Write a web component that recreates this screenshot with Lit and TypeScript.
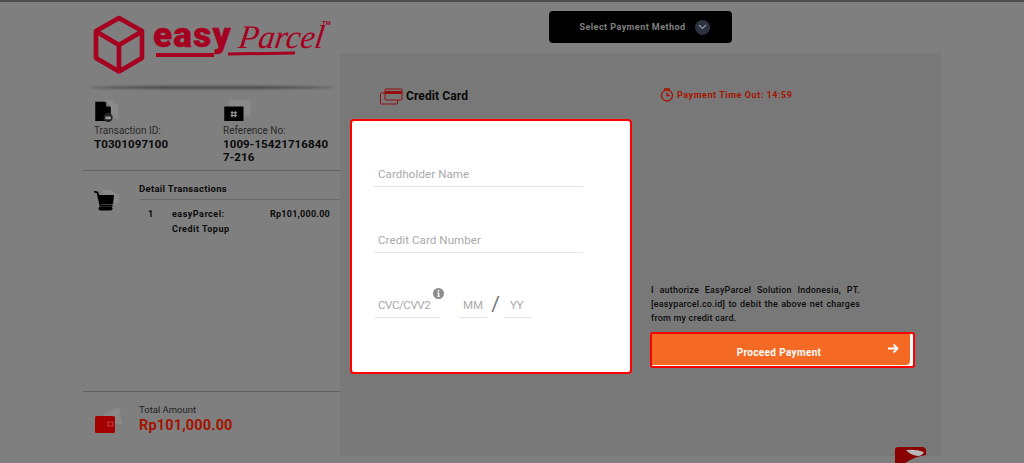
import { LitElement, html, css, svg } from "lit";
import { customElement } from "lit/decorators.js";

const logoMark = svg`<svg class="mark" width="52" height="60" viewBox="0 0 52 60" fill="none" stroke="#a5001f" stroke-width="4.6" stroke-linejoin="round"><path d="M26 3 L49 16 V43 L26 56.5 L3 43 V16 Z"/><path d="M4 17 L26 30 L48 17 M26 30 V55"/></svg>`;

@customElement("app-root")
export class AppRoot extends LitElement {
  static styles = css`
    :host { display: block; width: 1024px; height: 463px; overflow: hidden; position: relative; background: #7f7f7f; font-family: Roboto, "Liberation Sans", sans-serif; color: #0a0a0a; border-top: 2px solid #4d4d4d; box-sizing: border-box; }
    .page { display: flex; height: 461px; padding-left: 83px; box-sizing: border-box; }
    .left { width: 257px; flex: none; display: flex; flex-direction: column; }
    .logo { height: 84px; flex: none; display: flex; align-items: flex-start; padding: 13px 0 0 10px; box-sizing: border-box; gap: 7px; position: relative; }
    .wordmark { position: relative; width: 180px; height: 56px; color: #a5001f; }
    .easy { position: absolute; left: 1px; top: 2px; font: 900 35px/38px Roboto, sans-serif; letter-spacing: 1.3px; -webkit-text-stroke: 0.5px #a5001f; }
    .parcel { position: absolute; left: 87px; top: -1px; font: italic 400 33px/46px "Liberation Serif", serif; letter-spacing: -0.3px; transform: skewX(-8deg); }
    .tm { position: absolute; left: 170px; top: 4px; font: 700 6px/8px "Liberation Sans", sans-serif; }
    .ul1 { position: absolute; left: 4px; top: 38px; width: 58px; height: 3.5px; background: #a5001f; }
    .ul2 { position: absolute; left: 76px; top: 37px; width: 67px; height: 3px; background: #a5001f; transform: rotate(-1deg); }
    .shadow { height: 3px; flex: none; width: 245px; margin-left: 6px; border-radius: 50%; background: #4a4a4a; filter: blur(1.2px); }
    .ids { display: grid; grid-template-columns: 129px 1fr; padding: 11px 0 0 11px; height: 82px; flex: none; box-sizing: border-box; border-bottom: 1px solid #5f5f5f; }
    .ids .lbl { font-size: 10px; line-height: 12px; color: #2a2a2a; margin-top: 3px; }
    .ids .val { font-size: 11.5px; line-height: 13px; font-weight: 700; letter-spacing: 0.1px; margin-top: 1px; white-space: nowrap; }
    .ico { height: 22px; display: block; }
    .detail { flex: 1; display: flex; padding: 12px 0 0 11px; border-bottom: 1px solid #5f5f5f; }
    .detail .cart { width: 45px; flex: none; padding-top: 7px; }
    .dt { flex: 1; min-width: 0; }
    .dt h3 { margin: 0; font-size: 9.5px; line-height: 12px; font-weight: 700; letter-spacing: 0.3px; padding-bottom: 4px; border-bottom: 1px solid #6a6a6a; }
    .row { display: grid; grid-template-columns: 24px 1fr auto; padding: 7px 10px 0 9px; font-size: 9px; line-height: 15px; font-weight: 700; letter-spacing: 0.25px; }
    .row .name { letter-spacing: 0.5px; }
    .total { height: 71px; flex: none; display: flex; padding: 12px 0 0 11px; box-sizing: border-box; }
    .total .w { width: 45px; flex: none; padding-top: 2px; }
    .total .t { font-size: 9.5px; line-height: 12px; color: #222; }
    .total .a { font-size: 14.5px; line-height: 17px; font-weight: 700; color: #a31300; letter-spacing: 0.15px; margin-top: 1px; }
    .right { width: 601px; flex: none; display: flex; flex-direction: column; }
    .top { height: 51px; flex: none; display: flex; justify-content: center; padding: 9px 0 0 8px; box-sizing: border-box; margin-left: -8px; }
    .select { width: 183px; height: 32px; background: #000; border-radius: 4px; display: flex; align-items: center; justify-content: center; gap: 9px; color: #808080; font-size: 9px; font-weight: 700; letter-spacing: 0.45px; padding-left: 8px; box-sizing: border-box; }
    .chev { width: 15px; height: 15px; border-radius: 50%; background: #2c3240; display: grid; place-items: center; }
    .panel { width: 601px; height: 403px; background: #787878; flex: none; display: grid; grid-template-columns: 292px 1fr; padding: 0 0 0 10px; box-sizing: border-box; }
    .lcol { display: flex; flex-direction: column; }
    .cchead { height: 66px; flex: none; display: flex; align-items: flex-start; padding: 35px 0 0 30px; box-sizing: border-box; gap: 3px; font-size: 12px; font-weight: 700; letter-spacing: 0.1px; line-height: 16px; }
    .card { width: 282px; height: 255px; background: #fff; border: 2px solid #f00; border-radius: 4px; box-sizing: border-box; padding: 46px 0 0 22px; display: flex; flex-direction: column; gap: 46px; }
    .field { border-bottom: 1px solid #e3e3e3; color: #a9a9a9; font-size: 11.5px; line-height: 14px; letter-spacing: 0.1px; padding: 0 0 5px 4px; }
    .wide { width: 205px; }
    .cvv-row { display: flex; align-items: flex-end; position: relative; margin-top: -6px; }
    .cvc { width: 62px; margin-left: 1px; padding-left: 3px; letter-spacing: -0.4px; }
    .mm { width: 24px; margin-left: 19px; padding-left: 4px; letter-spacing: 0; }
    .yy { width: 22px; padding-left: 6px; letter-spacing: -0.4px; }
    .slash { width: 17px; text-align: center; color: #777; font-size: 21px; line-height: 22px; padding-bottom: 3px; font-weight: 400; }
    .info { position: absolute; left: 59px; top: -5px; }
    .rcol { display: flex; flex-direction: column; padding-left: 9px; }
    .timeout { display: flex; gap: 3px; align-items: center; height: 16px; margin: 34px 0 0 9px; color: #a31300; font-size: 9px; font-weight: 700; letter-spacing: 0.55px; }
    .terms { width: 209px; margin-top: 180px; font-size: 9px; line-height: 14px; font-weight: 500; letter-spacing: 0.2px; text-align: justify; color: #0c0c0c; }
    .btn { width: 265px; height: 36px; margin: 7px 0 0 -1px; border: 2px solid #f00; border-radius: 3px; box-sizing: border-box; background: #fff; display: flex; }
    .btn-in { width: 258px; height: 31px; border-radius: 0 0 4px 0; background: #f46a25; color: #fff; font-size: 10px; font-weight: 700; letter-spacing: 0.35px; display: flex; align-items: center; justify-content: center; position: relative; padding: 6px 4px 0 0; box-sizing: border-box; }
    .arrow { position: absolute; right: 11px; top: 9px; }
    .fab { position: absolute; left: 895px; top: 445px; width: 32px; height: 16px; }
  `;

  render() {
    return html`
      <div class="page">
        <div class="left">
          <div class="logo">
            ${logoMark}
            <div class="wordmark">
              <span class="easy">easy</span><span class="parcel">Parcel</span><span class="tm">TM</span>
              <div class="ul1"></div><div class="ul2"></div>
            </div>
          </div>
          <div class="shadow"></div>
          <div class="ids">
            <div>
              <svg class="ico" width="30" height="24" viewBox="0 0 30 24"><path d="M10 0 H18 L25 6 V20 H10Z" fill="#8a8a8a"/><path d="M0 2 H11 L17 8 V23 H0Z" fill="#000"/><path d="M12 3 L16 7 H12Z" fill="#888"/><circle cx="14" cy="19" r="5" fill="#222"/><path d="M11 18h6v3h-6z" fill="#999"/></svg>
              <div class="lbl">Transaction ID:</div>
              <div class="val">T0301097100</div>
            </div>
            <div>
              <svg class="ico" width="30" height="24" viewBox="0 0 30 24"><rect x="5" y="0" width="24" height="17" rx="2" fill="#8a8a8a"/><rect x="0" y="7" width="21" height="16" rx="1" fill="#000"/><path d="M8.500 12v7M12 12v7M7 14h7M7 17h7" stroke="#bbb" stroke-width="1"/></svg>
              <div class="lbl">Reference No:</div>
              <div class="val">1009-15421716840<br />7-216</div>
            </div>
          </div>
          <div class="detail">
            <div class="cart">
              <svg width="28" height="21" viewBox="0 0 28 21"><path d="M7 0h10l8 5v7l-9 3z" fill="#8a8a8a"/><path d="M0 1.500l3.500 1 3 13h12" stroke="#000" stroke-width="1.800" fill="none"/><path d="M4 5h16l-1 9H6z" fill="#000"/><rect x="4.500" y="16.500" width="14" height="4" rx="2" fill="#000"/></svg>
            </div>
            <div class="dt">
              <h3>Detail Transactions</h3>
              <div class="row"><span>1</span><span class="name">easyParcel:<br />Credit Topup</span><span>Rp101,000.00</span></div>
            </div>
          </div>
          <div class="total">
            <div class="w">
              <svg width="30" height="28" viewBox="0 0 30 28"><path d="M9 8 L25 1 L28 18 H12Z" fill="#8a8a8a"/><rect x="1" y="10" width="20" height="17" rx="1.500" fill="#a30000"/><rect x="14" y="16" width="5" height="4" fill="none" stroke="#c96060" stroke-width=".7"/></svg>
            </div>
            <div>
              <div class="t">Total Amount</div>
              <div class="a">Rp101,000.00</div>
            </div>
          </div>
        </div>
        <div class="right">
          <div class="top">
            <div class="select">Select Payment Method
              <span class="chev"><svg width="9" height="6" viewBox="0 0 9 6"><path d="M1 1l3.500 3.500L8 1" fill="none" stroke="#8d93a0" stroke-width="1.200"/></svg></span>
            </div>
          </div>
          <div class="panel">
            <div class="lcol">
              <div class="cchead">
                <svg width="23" height="17" viewBox="0 0 23 17" fill="none" stroke="#930f0f"><rect x=".5" y="5" width="17" height="11" rx="1"/><rect x="5" y="1" width="17" height="11" rx="1" fill="#787878"/><rect x="5" y="3" width="17" height="3" fill="#930f0f" stroke="none"/></svg>
                Credit Card
              </div>
              <div class="card">
                <div class="field wide">Cardholder Name</div>
                <div class="field wide">Credit Card Number</div>
                <div class="cvv-row">
                  <div class="field cvc">CVC/CVV2</div>
                  <svg class="info" width="11" height="11" viewBox="0 0 11 11"><circle cx="5.500" cy="5.500" r="5.500" fill="#8d8d8d"/><path d="M4.700 2h1.600v1.500H4.700zM4.200 4.500h2.100v3.200h.7v1H4.200v-1h.7V5.500h-.7z" fill="#fff"/></svg>
                  <div class="field mm">MM</div>
                  <div class="slash">/</div>
                  <div class="field yy">YY</div>
                </div>
              </div>
            </div>
            <div class="rcol">
              <div class="timeout">
                <svg width="14" height="14" viewBox="0 0 14 14" fill="none" stroke="#a31300" stroke-width="1.300"><circle cx="7" cy="7.500" r="5.500"/><path d="M7 4.500v3h3M4 1h6"/></svg>
                Payment Time Out: 14:59
              </div>
              <div class="terms">I authorize EasyParcel Solution Indonesia, PT. [easyparcel.co.id] to debit the above net charges from my credit card.</div>
              <div class="btn">
                <div class="btn-in">Proceed Payment
                  <svg class="arrow" width="11" height="11" viewBox="0 0 11 11" fill="none" stroke="#fff" stroke-width="1.800"><path d="M0 5.500h9M5.500 1.500l4 4-4 4"/></svg>
                </div>
              </div>
            </div>
          </div>
        </div>
      </div>
      <svg class="fab" viewBox="0 0 32 16"><path d="M0 3q0-3 3-3h24q4 0 4 4v4q-10 1-21 8H0z" fill="#8a0000"/><path d="M11 3q10-1 18 2q-2 4-6 4q-8-1-12-6z" fill="#b8b8b8"/></svg>
    `;
  }
}
